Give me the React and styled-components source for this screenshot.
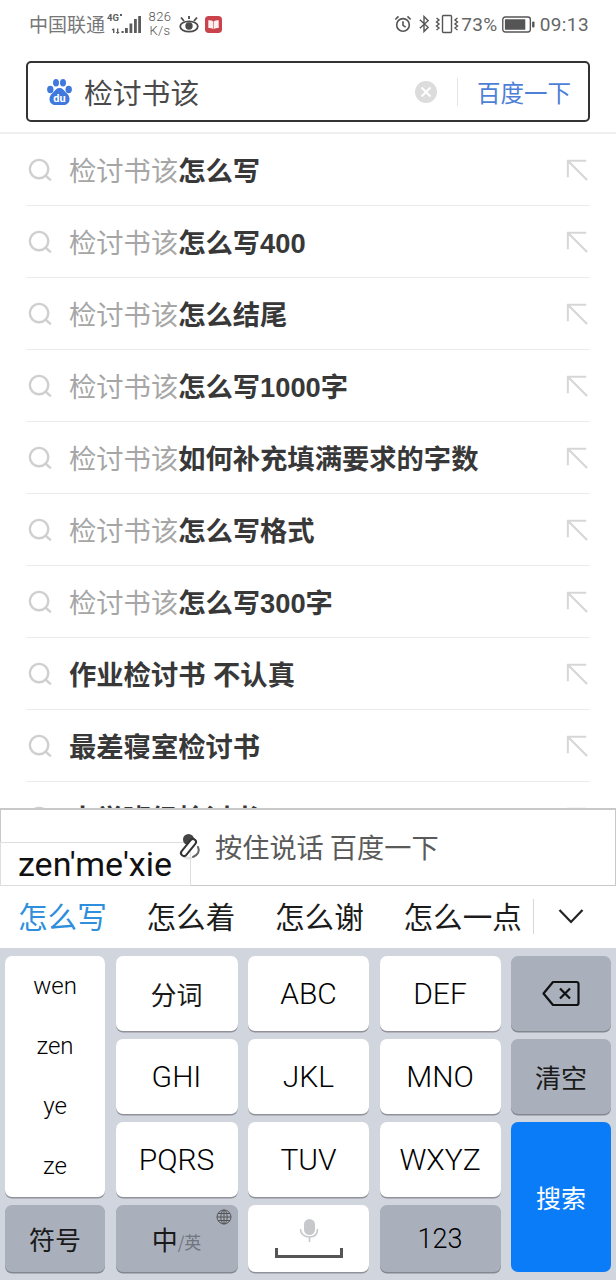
import React from 'react';
import styled, { createGlobalStyle } from 'styled-components';

const CJK = '"Noto Sans CJK SC", "Noto Sans", sans-serif';
const KEYFONT = 'Roboto, "Noto Sans CJK SC", sans-serif';

const GlobalStyle = createGlobalStyle`
    html, body {
        margin: 0;
        padding: 0;
        background: #fff;
    }
    * {
        box-sizing: border-box;
    }
`;

const Page = styled.div`
    width: 616px;
    height: 1280px;
    display: flex;
    flex-direction: column;
    overflow: hidden;
    background: #fff;
    font-family: ${CJK};
`;

/* 상단 상태바 */
const StatusBar = styled.div`
    height: 48px;
    flex: none;
    padding: 0 27px 0 29px;
    display: flex;
    align-items: center;
    justify-content: space-between;
    color: #6b6b6b;
`;

const StatusGroup = styled.div`
    display: flex;
    align-items: center;
`;

const Slot = styled.span`
    display: flex;
    margin-left: ${(p) => p.$gap || 0}px;
`;

const Carrier = styled.span`
    font-size: 19px;
    line-height: 24px;
    color: #777;
`;

const Speed = styled.div`
    width: 26px;
    margin: 0 6px 0 6px;
    font-family: Roboto, sans-serif;
    font-size: 13px;
    font-weight: 300;
    line-height: 14px;
    letter-spacing: 0.4px;
    text-align: center;
    color: #555;
`;

const StatusText = styled.span`
    margin-left: ${(p) => p.$gap || 0}px;
    font-family: Roboto, sans-serif;
    font-size: 19px;
    letter-spacing: 0.4px;
    color: #666;
`;

const SearchArea = styled.div`
    height: 86px;
    flex: none;
    padding: 13px 26px 0;
    border-bottom: 2px solid #efefef;
`;

const SearchBox = styled.div`
    height: 61px;
    border: 2px solid #333;
    border-radius: 5px;
    display: flex;
    align-items: center;
    padding: 0 17px 0 19px;
`;

const SearchText = styled.div`
    flex: 1;
    margin-left: 12px;
    font-size: 28.8px;
    color: #4a4a4a;
`;

const ClearButton = styled.div`
    width: 22px;
    height: 22px;
    margin-right: 20px;
    display: flex;
    align-items: center;
    justify-content: center;
    border-radius: 50%;
    background: #dcdcdc;
`;

const SearchButton = styled.div`
    height: 28px;
    padding-left: 19px;
    border-left: 1px solid #e4e4e4;
    display: flex;
    align-items: center;
    font-size: 23.5px;
    color: #4e7fd6;
`;

const List = styled.div`
    flex: 1;
    min-height: 0;
    overflow: hidden;
    padding: 0 26px;
`;

const Row = styled.div`
    height: 72px;
    display: flex;
    align-items: center;
    border-bottom: 1px solid #ececec;
    padding: 1px 2px 0 2px;
`;

const RowText = styled.div`
    flex: 1;
    margin-left: 17px;
    font-size: 27.3px;
    line-height: 36px;
    white-space: nowrap;
    color: #a6a6a6;
`;

// 숫자는 Arial 폭에 맞춘다
const Bold = styled.span`
    font-family: "Liberation Sans", ${CJK};
    font-weight: 700;
    color: #383838;
`;

const VoiceBar = styled.div`
    position: relative;
    height: 78px;
    flex: none;
    border: 1px solid #c8c8c8;
    border-top-width: 2px;
    background: #fff;
    display: flex;
    align-items: center;
    padding-left: 175px;
    font-size: 27.2px;
    color: #5a5a5a;
`;

const VoiceMark = styled.svg`
    position: relative;
    z-index: 1;
    flex: none;
`;

const VoiceLabel = styled.span`
    margin: 0 0 4px 12px;
`;

const Composing = styled.div`
    position: absolute;
    left: -1px;
    bottom: -1px;
    width: 191px;
    height: 44px;
    background: #fff;
    border: 1px solid #dedede;
    padding-left: 17px;
    font-family: Roboto, sans-serif;
    font-size: 34px;
    line-height: 43px;
    white-space: nowrap;
    color: #111;
`;

const Candidates = styled.div`
    height: 62px;
    flex: none;
    display: flex;
    align-items: center;
    padding-left: 18px;
    font-size: 29.6px;
`;

const Candidate = styled.span`
    width: 128.500px;
    margin-bottom: 4px;
    flex: none;
    white-space: nowrap;
    color: ${(p) => (p.$active ? '#2f8fdc' : '#1c1c1c')};
`;

const CandidateToggle = styled.div`
    height: 35px;
    margin: 0 0 2px 1px;
    padding-left: 24px;
    border-left: 1px solid #d8d8d8;
    display: flex;
    align-items: center;
`;

const Keyboard = styled.div`
    height: 332px;
    flex: none;
    background: #d1d5de;
    padding: 8px 5px 0;
    display: grid;
    grid-template-columns: 100px 122px 121px 121px 100px;
    grid-template-rows: 75px 75px 75px 67px;
    column-gap: 10.500px;
    row-gap: 8px;
    align-content: start;
`;

const Key = styled.div`
    position: relative;
    display: flex;
    align-items: center;
    justify-content: center;
    border-radius: 7px;
    background: ${(p) => (p.$dark ? '#a9b0bc' : '#fff')};
    box-shadow: 0 1.500px 0 ${(p) => (p.$dark ? '#83888f' : '#8f929a')};
    font-family: ${KEYFONT};
    font-size: ${(p) => p.$size || 30}px;
    font-weight: 350;
    color: #000;
    grid-row: ${(p) => p.$row || 'auto'};
    grid-column: ${(p) => p.$col || 'auto'};
`;

const PinyinKey = styled(Key)`
    flex-direction: column;
    justify-content: space-around;
    padding: 0 0 1px;
    font-size: 24px;
`;

const CjkKey = styled(Key)`
    font-family: ${CJK};
    font-size: 26px;
    font-weight: 400;
    color: #1a1a1a;
`;

const SearchKey = styled(CjkKey)`
    background: #0a7cf8;
    box-shadow: none;
    font-size: 25px;
    color: #fff;
`;

const SubLabel = styled.span`
    margin-top: 6px;
    font-size: 17px;
    color: #70757e;
`;

const GlobeMark = styled.svg`
    position: absolute;
    top: 4px;
    right: 6px;
`;

const SpaceKey = styled(Key)`
    flex-direction: column;
    justify-content: flex-start;
    padding-top: 14px;
`;

const SpaceBar = styled.div`
    width: 68px;
    height: 10px;
    margin-top: 5px;
    border: 3px solid #555;
    border-top: none;
`;

const Search = () => (
    <svg width="24" height="24" viewBox="0 0 26 26" fill="none" stroke="#cfcfcf" strokeWidth="2.600" strokeLinecap="round">
        <circle cx="12" cy="12" r="10"/>
        <path d="M19.500 19.500l4.500 4"/>
    </svg>
);

const Arrow = () => (
    <svg width="22" height="22" viewBox="0 0 24 24" fill="none" stroke="#d6d6d6" strokeWidth="2.200">
        <path d="M2 20V2h20M2 2l21 21"/>
    </svg>
);

const Paw = () => (
    <svg width="25" height="26" viewBox="0 0 25 26">
        <g fill="#3f79de">
            <ellipse cx="3.300" cy="10.500" rx="3.200" ry="3.700"/>
            <ellipse cx="9" cy="3.800" rx="3" ry="3.800"/>
            <ellipse cx="16" cy="3.800" rx="3" ry="3.800"/>
            <ellipse cx="21.700" cy="10.500" rx="3.200" ry="3.700"/>
            <path d="M12.500 9c3 0 4 2 6 4s4 3.500 4 7c0 4-3 6-6 6h-8c-3 0-6-2-6-6 0-3.500 2-5 4-7s3-4 6-4z"/>
        </g>
        <text x="12.500" y="23" textAnchor="middle" fontFamily="Roboto, sans-serif" fontSize="11" fontWeight="700" fill="#fff">du</text>
    </svg>
);

// 4G 표시 + 신호 막대
const Signal = () => (
    <svg width="34" height="22" viewBox="0 0 34 22" fill="#5c5c5c">
        <text x="0" y="7.500" fontFamily="Roboto, sans-serif" fontSize="9.500" fontWeight="700">4G</text>
        <rect x="13" y="1" width="2" height="2"/>
        <path d="M6 15.500l-1.200 1v.8H6V20h1.400v-4.500zM10 15.500h1.400V19h1.300l-2 2-2-2H10zM14.500 18h2.200v2h-2.200zM18 15h2.800v5H18zM22.500 10.500h2.800V20h-2.800zM27 6h2.800v14H27zM31.200 3H34v17h-2.800z"/>
    </svg>
);

const Eye = () => (
    <svg width="20" height="17" viewBox="0 0 20 17" fill="none" stroke="#4a4a4a" strokeWidth="1.800">
        <ellipse cx="10" cy="10.500" rx="8.800" ry="5.200"/>
        <circle cx="10" cy="10" r="2.800" fill="#4a4a4a"/>
        <path d="M2 1.500l3 3.500M10 0v3M18 1.500L15 5"/>
    </svg>
);

const BookBadge = () => (
    <svg width="17" height="17" viewBox="0 0 18 18">
        <rect width="18" height="18" rx="4" fill="#c9424c"/>
        <path d="M3.500 4.500c2 0 4 .2 5.200 1.200V14c-1.200-.9-3.200-1.200-5.200-1.200zM14.500 4.500c-2 0-4 .2-5.200 1.200V14c1.200-.9 3.200-1.200 5.200-1.200z" fill="#fbeeee"/>
    </svg>
);

const Alarm = () => (
    <svg width="18" height="18" viewBox="0 0 20 20" fill="none" stroke="#555" strokeWidth="1.800">
        <circle cx="10" cy="11" r="7"/>
        <path d="M10 7v4.500l3 2M1.500 5L5 1.500M18.500 5L15 1.500"/>
    </svg>
);

const Bluetooth = () => (
    <svg width="10" height="18" viewBox="0 0 12 20" fill="none" stroke="#555" strokeWidth="1.700">
        <path d="M1 5l10 9-5 5V1l5 5-10 9"/>
    </svg>
);

const Vibrate = () => (
    <svg width="24" height="20" viewBox="0 0 24 20" fill="none" stroke="#555" strokeWidth="1.400">
        <rect x="7.500" y="1.500" width="9" height="17" rx="1"/>
        <path d="M1.500 4l2.500 2-2.500 2 2.500 2-2.500 2 2.500 2-2.500 2M22.500 4L20 6l2.500 2L20 10l2.500 2-2.500 2 2.500 2"/>
    </svg>
);

const Battery = () => (
    <svg width="33" height="17" viewBox="0 0 34 17">
        <rect x=".8" y=".8" width="28.400" height="15.400" rx="2.500" fill="none" stroke="#555" strokeWidth="1.400"/>
        <rect x="3" y="3" width="21" height="11" rx=".6" fill="#555"/>
        <rect x="31" y="5.500" width="2.500" height="6" rx="1" fill="#555"/>
    </svg>
);

const VoiceIcon = () => (
    <VoiceMark width="27" height="30" viewBox="0 0 27 30" fill="none" strokeLinecap="round">
        <path d="M6 19c0 4 4 7 9 6" stroke="#e2e2e2" strokeWidth="2.500"/>
        <circle cx="12.500" cy="6.500" r="5.500" fill="#444"/>
        <path d="M17 9L8 20" stroke="#333" strokeWidth="8"/>
        <path d="M17 9L8 20" stroke="#fff" strokeWidth="4"/>
        <path d="M22 14c2 4 0 8-5 10" stroke="#666" strokeWidth="2"/>
    </VoiceMark>
);

const Mic = () => (
    <svg width="20" height="24" viewBox="0 0 20 24" fill="none">
        <rect x="5" y="0" width="11" height="16" rx="5.500" fill="#c6c8cc"/>
        <path d="M1.500 10c0 5 4 8 9 8s8-3 8-8M10.500 18v5" stroke="#c6c8cc" strokeWidth="1.600"/>
    </svg>
);

const Globe = () => (
    <GlobeMark width="16" height="16" viewBox="0 0 16 16" fill="none" stroke="#555" strokeWidth="1">
        <circle cx="8" cy="8" r="7"/>
        <ellipse cx="8" cy="8" rx="3.200" ry="7"/>
        <path d="M8 1v14M1 8h14M2 4.500h12M2 11.500h12"/>
    </GlobeMark>
);

const Backspace = () => (
    <svg width="38" height="27" viewBox="0 0 38 27" fill="none" stroke="#111" strokeWidth="2.200" strokeLinejoin="round">
        <path d="M1.500 13.500L11 2h23.500a2 2 0 012 2v19a2 2 0 01-2 2H11z"/>
        <path d="M18 8.500l10 10M28 8.500l-10 10"/>
    </svg>
);

const suggestions = [
    {plain: '检讨书该', bold: '怎么写'},
    {plain: '检讨书该', bold: '怎么写400'},
    {plain: '检讨书该', bold: '怎么结尾'},
    {plain: '检讨书该', bold: '怎么写1000字'},
    {plain: '检讨书该', bold: '如何补充填满要求的字数'},
    {plain: '检讨书该', bold: '怎么写格式'},
    {plain: '检讨书该', bold: '怎么写300字'},
    {plain: '', bold: '作业检讨书 不认真'},
    {plain: '', bold: '最差寝室检讨书'},
    {plain: '', bold: '大学班级检讨书'},
];

const App = () => (
    <Page>
        <GlobalStyle/>
        <StatusBar>
            <StatusGroup>
                <Carrier>中国联通</Carrier>
                <Slot $gap={2}><Signal/></Slot>
                <Speed>826 K/s</Speed>
                <Eye/>
                <Slot $gap={6}><BookBadge/></Slot>
            </StatusGroup>
            <StatusGroup>
                <Alarm/>
                <Slot $gap={7}><Bluetooth/></Slot>
                <Slot $gap={6}><Vibrate/></Slot>
                <StatusText $gap={2}>73%</StatusText>
                <Slot $gap={4}><Battery/></Slot>
                <StatusText $gap={5}>09:13</StatusText>
            </StatusGroup>
        </StatusBar>
        <SearchArea>
            <SearchBox>
                <Paw/>
                <SearchText>检讨书该</SearchText>
                <ClearButton>
                    <svg width="12" height="12" viewBox="0 0 12 12" stroke="#fff" strokeWidth="2">
                        <path d="M1.500 1.500l9 9M10.500 1.500l-9 9"/>
                    </svg>
                </ClearButton>
                <SearchButton>百度一下</SearchButton>
            </SearchBox>
        </SearchArea>
        <List>
            {suggestions.map((s) => (
                <Row key={s.plain + s.bold}>
                    <Search/>
                    <RowText>{s.plain}<Bold>{s.bold}</Bold></RowText>
                    <Arrow/>
                </Row>
            ))}
        </List>
        <VoiceBar>
            <VoiceIcon/>
            <VoiceLabel>按住说话 百度一下</VoiceLabel>
            <Composing>zen'me'xie</Composing>
        </VoiceBar>
        <Candidates>
            <Candidate $active>怎么写</Candidate>
            <Candidate>怎么着</Candidate>
            <Candidate>怎么谢</Candidate>
            <Candidate>怎么一点</Candidate>
            <CandidateToggle>
                <svg width="26" height="16" viewBox="0 0 26 16" fill="none" stroke="#222" strokeWidth="2.200">
                    <path d="M1.500 2L13 14 24.500 2"/>
                </svg>
            </CandidateToggle>
        </Candidates>
        <Keyboard>
            <PinyinKey $row="1 / 4">
                <span>wen</span>
                <span>zen</span>
                <span>ye</span>
                <span>ze</span>
            </PinyinKey>
            <CjkKey>分词</CjkKey>
            <Key>ABC</Key>
            <Key>DEF</Key>
            <Key $dark><Backspace/></Key>
            <Key>GHI</Key>
            <Key>JKL</Key>
            <Key>MNO</Key>
            <CjkKey $dark>清空</CjkKey>
            <Key>PQRS</Key>
            <Key>TUV</Key>
            <Key>WXYZ</Key>
            <SearchKey $row="3 / 5" $col="5">搜索</SearchKey>
            <CjkKey $dark>符号</CjkKey>
            <CjkKey $dark>
                中<SubLabel>/英</SubLabel>
                <Globe/>
            </CjkKey>
            <SpaceKey>
                <Mic/>
                <SpaceBar/>
            </SpaceKey>
            <Key $dark $size={27}>123</Key>
        </Keyboard>
    </Page>
);

export default App;
